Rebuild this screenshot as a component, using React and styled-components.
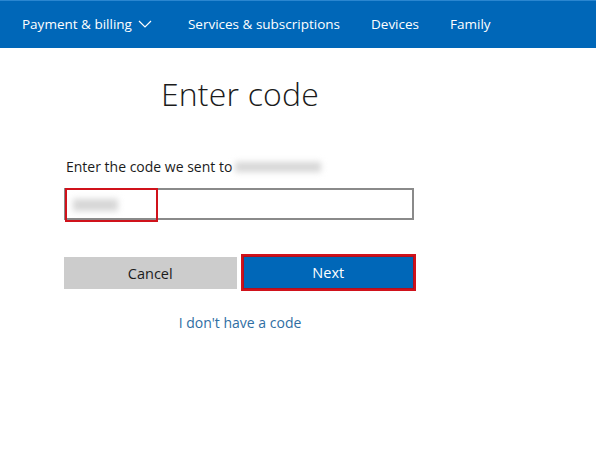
import React from "react"
import styled, { createGlobalStyle } from "styled-components"

const GlobalStyle = createGlobalStyle`
  body {
    margin: 0;
    background: #ffffff;
    font-family: "Open Sans", "Noto Sans", sans-serif;
  }
`

const NavBar = styled.nav`
  height: 48px;
  background: #0067b8;
  border-top: 1px solid #2a86d0;
  box-sizing: border-box;
  display: flex;
  align-items: center;
  padding-left: 22px;
  gap: 31px;
`

const NavItem = styled.span`
  color: #ffffff;
  font-size: 13.5px;
  display: flex;
  align-items: center;
  gap: 6px;
  padding-bottom: 1px;
  margin-right: ${({ extra }) => extra || 0}px;
`

const Main = styled.main`
  width: 352px;
  margin-left: 64px;
  display: flex;
  flex-direction: column;
`

const Title = styled.h1`
  margin: 26px 0 0;
  text-align: center;
  font-size: 32px;
  font-weight: 300;
  line-height: 40px;
  color: #1b1b1b;
  letter-spacing: 0.2px;
`

const Label = styled.div`
  margin-top: 43px;
  padding-left: 2px;
  font-size: 14px;
  color: #1b1b1b;
  display: flex;
  align-items: center;
`

const Blur = styled.span`
  display: inline-block;
  width: ${({ w }) => w}px;
  height: ${({ h }) => h || 10}px;
  margin-left: ${({ ml }) => ml || 0}px;
  background: #d6d6d6;
  filter: blur(3px);
`

const InputRow = styled.div`
  position: relative;
  margin-top: 12px;
  width: 350px;
  height: 32px;
  border: 2px solid #8a8a8a;
  box-sizing: border-box;
`

const Highlight = styled.div`
  position: absolute;
  left: -1px;
  top: -2px;
  width: 93px;
  height: 34px;
  border: 2px solid #d0121b;
  box-sizing: border-box;
  display: flex;
  align-items: center;
  padding-left: 6px;
`

const Buttons = styled.div`
  margin-top: 34px;
  display: flex;
  align-items: center;
  gap: 4px;
`

const Button = styled.button`
  width: ${({ primary }) => (primary ? 176 : 173)}px;
  height: ${({ primary }) => (primary ? 37 : 32)}px;
  margin-top: ${({ primary }) => (primary ? 0 : 1)}px;
  border: ${({ primary }) => (primary ? "2px solid #d0121b" : "none")};
  outline: none;
  background: ${({ primary }) => (primary ? "#0067b8" : "#cccccc")};
  color: ${({ primary }) => (primary ? "#ffffff" : "#1b1b1b")};
  box-shadow: ${({ primary }) => (primary ? "inset 0 0 0 1px #b01020" : "none")};
  font-family: "Open Sans", "Noto Sans", sans-serif;
  font-size: 14.5px;
  padding: 0;
  box-sizing: border-box;
`

const Link = styled.a`
  margin-top: 22px;
  align-self: center;
  color: #2f6ea3;
  font-size: 14px;
  text-decoration: none;
`

const Chevron = () => (
  <svg width="14" height="8" viewBox="0 0 14 8">
    <polyline points="1,1 7,7 13,1" fill="none" stroke="#ffffff" strokeWidth="1.2" />
  </svg>
)

export default function App() {
  return (
    <>
      <GlobalStyle />
      <NavBar>
        <NavItem extra={5}>
          Payment &amp; billing <Chevron />
        </NavItem>
        <NavItem>Services &amp; subscriptions</NavItem>
        <NavItem>Devices</NavItem>
        <NavItem>Family</NavItem>
      </NavBar>
      <Main>
        <Title>Enter code</Title>
        <Label>
          Enter the code we sent to
          <Blur w={86} ml={3} />
        </Label>
        <InputRow>
          <Highlight>
            <Blur w={45} h={12} />
          </Highlight>
        </InputRow>
        <Buttons>
          <Button>Cancel</Button>
          <Button primary>Next</Button>
        </Buttons>
        <Link href="#">I don't have a code</Link>
      </Main>
    </>
  )
}
